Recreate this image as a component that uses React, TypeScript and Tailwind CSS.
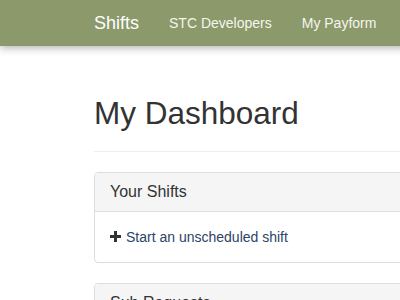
import React from "react";

const navLinks = ["STC Developers", "My Payform"];

function PlusIcon() {
  return (
    <svg width="11" height="11" viewBox="0 0 11 11" className="inline-block mr-[5px] -mt-[2px] align-middle">
      <rect x="4" y="0" width="3" height="11" fill="#333" />
      <rect x="0" y="4" width="11" height="3" fill="#333" />
    </svg>
  );
}

function Panel({ title, children }: { title: string; children?: React.ReactNode }) {
  return (
    <div className="mb-5 rounded-[4px] border border-[#dddddd] bg-white">
      <div className="border-b border-[#dddddd] bg-[#f5f5f5] px-[15px] py-[10px] rounded-t-[3px]">
        <h3 className="text-[16px] leading-[17.6px] text-[#333333]">{title}</h3>
      </div>
      <div className="px-[15px] py-[15px] text-[14px] leading-5">{children}</div>
    </div>
  );
}

export default function App() {
  return (
    <div
      className="w-[400px] h-[300px] overflow-hidden bg-white"
      style={{ fontFamily: '"Liberation Sans", Arial, sans-serif' }}
    >
      {/* Navbar */}
      <nav className="relative z-10 h-[46px] w-[1000px] bg-[#8b996b] shadow-[0_2px_8px_rgba(0,0,0,0.3)] flex items-center pl-[94px]">
        <span className="text-[18px] text-white pr-[15px]">Shifts</span>
        {navLinks.map((l) => (
          <span key={l} className="text-[14px] text-[#f4f6ee] px-[15px]">
            {l}
          </span>
        ))}
      </nav>

      {/* Content */}
      <div className="w-[1000px] pl-[94px] pt-[50px]">
        <div className="border-b border-[#eeeeee] pb-[20px] mb-[20px]">
          <h1 className="text-[31.5px] leading-[35px] text-[#333333]">My Dashboard</h1>
        </div>

        <Panel title="Your Shifts">
          <a className="text-[#2a4468]">
            <PlusIcon />
            Start an unscheduled shift
          </a>
        </Panel>

        <Panel title="Sub Requests" />
      </div>
    </div>
  );
}
